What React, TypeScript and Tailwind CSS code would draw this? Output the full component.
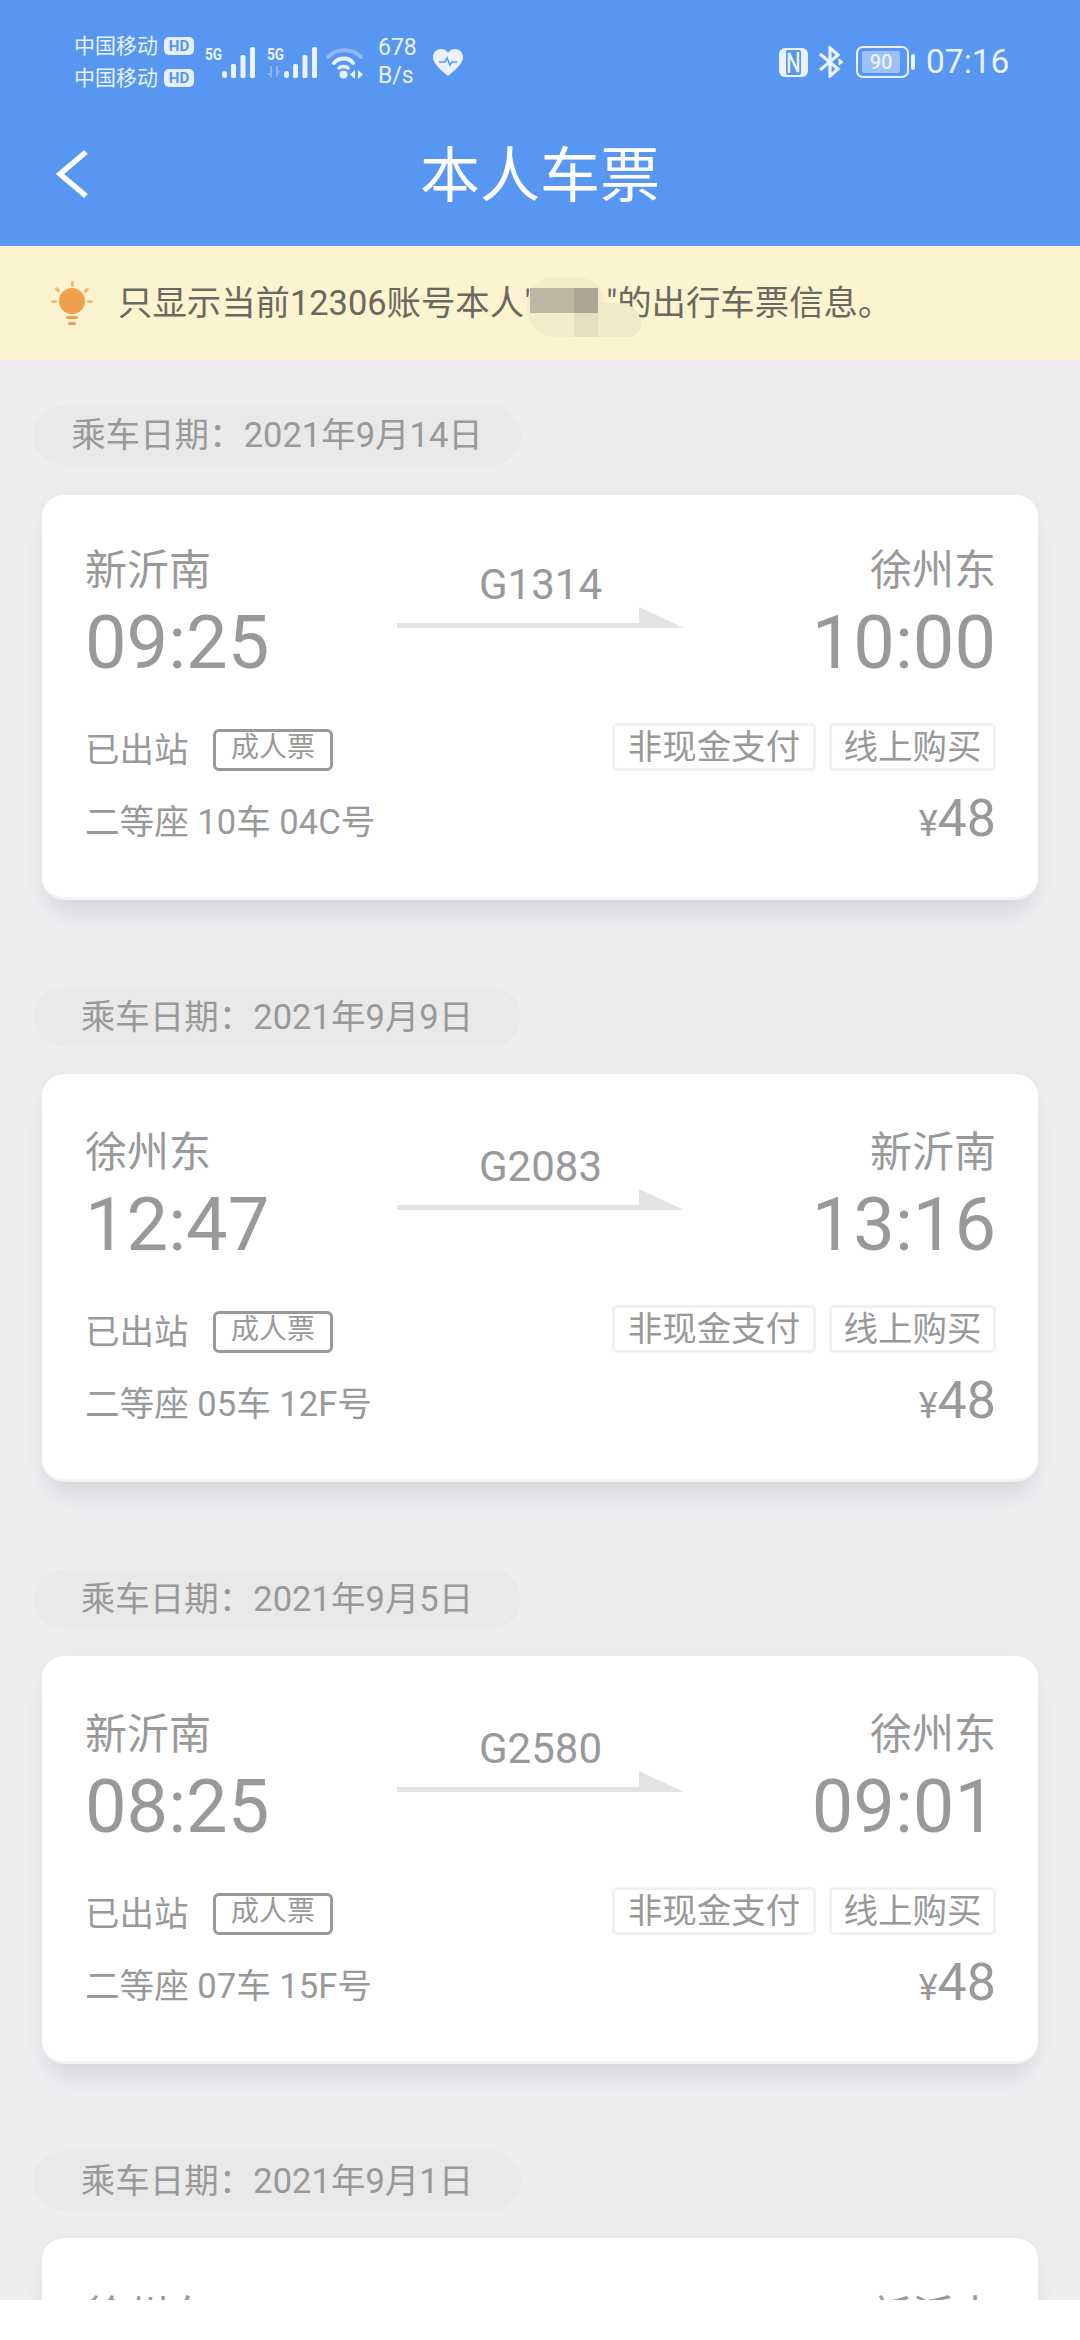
const tickets = [
	{ date: "2021年9月14日", from: "新沂南", to: "徐州东", dep: "09:25", arr: "10:00", no: "G1314", seat: "二等座 10车 04C号" },
	{ date: "2021年9月9日", from: "徐州东", to: "新沂南", dep: "12:47", arr: "13:16", no: "G2083", seat: "二等座 05车 12F号" },
	{ date: "2021年9月5日", from: "新沂南", to: "徐州东", dep: "08:25", arr: "09:01", no: "G2580", seat: "二等座 07车 15F号" },
	{ date: "2021年9月1日", from: "徐州东", to: "新沂南", dep: "", arr: "", no: "", seat: "" },
]

const HdBadge = () => (
	<span className="flex items-center justify-center w-[30px] h-[18px] rounded-[5px] bg-[#e6effd] text-[#5797f1] text-[15px] font-bold leading-none">
		HD
	</span>
)

const SignalBars = () => (
	<svg width="33" height="31" viewBox="0 0 33 31" fill="#e9f2fe">
		<rect x="0" y="24" width="5" height="7" rx="2.5" />
		<rect x="9" y="17" width="5" height="14" rx="1.5" />
		<rect x="18.5" y="8" width="5" height="23" rx="1.5" />
		<rect x="28" y="0" width="5" height="31" rx="1.5" />
	</svg>
)

const FiveG = () => (
	<span className="self-start w-[17px] mt-[1px] origin-left scale-x-[0.85] text-[16px] font-bold leading-none">5G</span>
)

const StatusBar = () => (
	<div className="flex items-center h-[104px] pt-[20px] pl-[74px] text-[#e9f2fe]">
		<div className="flex flex-col gap-[11px] w-[120px] text-[21px] leading-[21px]">
			<div className="flex items-center gap-[6px]">
				<span>中国移动</span>
				<HdBadge />
			</div>
			<div className="flex items-center gap-[6px]">
				<span>中国移动</span>
				<HdBadge />
			</div>
		</div>
		<div className="flex items-end ml-[11px] h-[32px]">
			<FiveG />
			<SignalBars />
		</div>
		<div className="relative flex items-end ml-[12px] h-[32px]">
			<FiveG />
			<svg className="absolute left-0 bottom-0" width="16" height="12" viewBox="0 0 16 12" fill="#8fb9f6">
				<path d="M5 0v12H3V5H0zM9 0l4 7h-2v5H9z" transform="matrix(1 0 0 -1 0 12)" />
			</svg>
			<SignalBars />
		</div>
		<svg className="ml-[9px]" width="37" height="33" viewBox="0 0 37 33" fill="none" strokeLinecap="round">
			<path d="M2 11C10 2 27 2 35 11" stroke="#8fb9f6" strokeWidth="4" />
			<path d="M8 17C13 11 23 11 27 17" stroke="#e9f2fe" strokeWidth="4" />
			<path d="M13 22C15 20 20 20 22 22" stroke="#e9f2fe" strokeWidth="3.5" />
			<circle cx="17.5" cy="28.5" r="4" fill="#e9f2fe" />
			<path d="M29 24v9l-5-4.500zM32 24l5 4.500-5 4.500z" fill="#e9f2fe" />
		</svg>
		<div className="flex flex-col items-start ml-[15px] w-[40px] text-[23px] leading-[28px]">
			<span>678</span>
			<span>B/s</span>
		</div>
		<svg className="ml-[15px]" width="30" height="27" viewBox="0 0 30 27">
			<path d="M15 27C8 21 0 15 0 8C0 3 4 0 8 0C11 0 13.500 1.500 15 4C16.500 1.500 19 0 22 0C26 0 30 3 30 8C30 15 22 21 15 27Z" fill="#e9f2fe" />
			<path d="M6 13h6l2-4 3 7 2-3h5" fill="none" stroke="#5797f1" strokeWidth="1.600" />
		</svg>
		<svg className="ml-[316px]" width="29" height="29" viewBox="0 0 29 29">
			<rect width="29" height="29" rx="6" fill="#e9f2fe" />
			<rect x="7" y="2" width="15" height="25" rx="2" fill="#5797f1" />
			<path d="M10 25V5L19 24V4" fill="none" stroke="#e9f2fe" strokeWidth="2.500" />
		</svg>
		<svg className="ml-[9px]" width="28" height="32" viewBox="0 0 28 32" fill="none" stroke="#e9f2fe" strokeWidth="3.200">
			<path d="M3 8L21 23L13 30V2L21 9L3 24" />
			<path d="M22 13l4 3-4 3z" fill="#e9f2fe" strokeWidth="1" />
		</svg>
		<div className="flex items-center ml-[11px] gap-[2px]">
			<div className="flex items-center w-[53px] h-[32px] rounded-[7px] border-2 border-[#e9f2fe] pl-[4px]">
				<span className="flex items-center justify-center w-[38px] h-[22px] rounded-[2px] bg-[#9cc0f8] text-[20px] leading-none font-medium">
					90
				</span>
			</div>
			<div className="w-[4px] h-[16px] rounded-full bg-[#e9f2fe]" />
		</div>
		<span className="ml-[11px] text-[33.500px] leading-none">07:16</span>
	</div>
)

const Header = () => (
	<header className="shrink-0 h-[246px] bg-[#5797f1]">
		<StatusBar />
		<div className="relative flex items-center justify-center h-[142px] pt-[4px]">
			<svg className="absolute left-[54px] top-[45px]" width="36" height="50" viewBox="0 0 36 50" fill="none">
				<path d="M32 3L6 25L32 47" stroke="#fff" strokeWidth="5.500" />
			</svg>
			<h1 className="text-[60px] leading-none text-white font-normal">本人车票</h1>
		</div>
	</header>
)

const Notice = () => (
	<div className="flex shrink-0 items-center h-[114px] bg-[#fcf3d1] pl-[51px] text-[34.400px] leading-none text-[#6b685f]">
		<svg width="42" height="44" viewBox="0 0 42 44" fill="#f19f4a">
			<circle cx="21" cy="20" r="13" />
			<rect x="20" y="0" width="3" height="6" rx="1.500" fill="#f5b878" />
			<rect x="0" y="19" width="6" height="3" rx="1.500" fill="#f5b878" />
			<rect x="36" y="19" width="6" height="3" rx="1.500" fill="#f5b878" />
			<rect x="5" y="6" width="3" height="6" rx="1.500" transform="rotate(-40 6 9)" fill="#f5b878" />
			<rect x="34" y="6" width="3" height="6" rx="1.500" transform="rotate(40 35 9)" fill="#f5b878" />
			<rect x="15" y="35" width="12" height="3" rx="1.500" />
			<rect x="17" y="41" width="8" height="3" rx="1.500" />
		</svg>
		<p className="ml-[25px] flex items-center whitespace-nowrap">
			只显示当前12306账号本人"
			{/* mosaic over the account name */}
			<span className="relative inline-block w-[71px] h-[34px]">
				<span className="absolute left-[-8px] top-[-9px] w-[78px] h-[60px] rounded-[28px] bg-[#f3ebca]" />
				<span className="absolute left-[63px] top-[17px] w-[43px] h-[34px] rounded-tr-[24px] rounded-br-[14px] bg-[#f0e9c8]" />
				<span className="absolute left-[-5px] top-[2px] w-[68px] h-[25px] bg-[#bdb7a2]" />
				<span className="absolute left-[39px] top-[2px] w-[24px] h-[25px] bg-[#aba593]" />
				<span className="absolute left-[39px] top-[27px] w-[24px] h-[24px] bg-[#e6dfc0]" />
			</span>
			"的出行车票信息。
		</p>
	</div>
)

const Arrow = () => (
	<svg width="287" height="21" viewBox="0 0 287 21" fill="#e3e3e3">
		<path d="M0 16H242V0L287 21H0Z" />
	</svg>
)

type Ticket = (typeof tickets)[number]

const TicketCard = ({ ticket, first }: { ticket: Ticket; first: boolean }) => (
	<div
		className={`mx-[42px] rounded-[22px] border-b-[3px] border-[#f3f3f5] bg-white pl-[43px] pr-[42px] text-[#999999] shadow-[0_0_24px_rgba(20,20,50,0.04),0_22px_26px_-10px_rgba(20,20,50,0.1)] ${
			first ? "h-[405px] mt-[30px] pt-[51px]" : "h-[408px] mt-[27px] pt-[54px]"
		}`}>
		<div className="flex justify-between">
			<div className="flex-1">
				<div className="text-[42px] leading-[50px]">{ticket.from}</div>
				<div className="mt-[11px] text-[74px] leading-[72px]">{ticket.dep}</div>
			</div>
			<div className="flex flex-col items-center w-[287px] pt-[19px]">
				<div className="text-[42px] leading-[40px] h-[42px]">{ticket.no}</div>
				<Arrow />
			</div>
			<div className="flex-1 text-right">
				<div className="text-[42px] leading-[50px]">{ticket.to}</div>
				<div className="mt-[11px] text-[74px] leading-[72px]">{ticket.arr}</div>
			</div>
		</div>
		<div className="flex items-end justify-between mt-[44px]">
			<div className="flex items-center">
				<span className="text-[34.500px] leading-[40px] w-[128px]">已出站</span>
				<span className="flex items-center justify-center w-[120px] h-[42px] rounded-[6px] border-[3px] border-[#999999] text-[28px] leading-none pb-[4px]">
					成人票
				</span>
			</div>
			<div className="flex gap-[13px] text-[34.500px] leading-none">
				<span className="flex items-center justify-center w-[204px] h-[48px] rounded-[5px] border-[3px] border-[#f1f1f3]">
					非现金支付
				</span>
				<span className="flex items-center justify-center w-[167px] h-[48px] rounded-[5px] border-[3px] border-[#f1f1f3]">
					线上购买
				</span>
			</div>
		</div>
		<div className="flex items-center justify-between mt-[23px]">
			<span className="text-[34.600px] leading-[50px]">{ticket.seat}</span>
			<span className="flex items-baseline text-[52px] leading-[50px]">
				<span className="text-[36px]">¥</span>48
			</span>
		</div>
	</div>
)

export default function App() {
	return (
		<div className="flex flex-col w-[1080px] h-[2340px] overflow-hidden bg-white font-[Roboto,'Noto_Sans_CJK_SC',sans-serif]">
			<Header />
			<Notice />
			<main className="h-[1940px] shrink-0 overflow-hidden bg-[#eeeef1] pt-[45px]">
				{tickets.map((ticket, i) => (
					<section key={ticket.date} className={i === 0 ? "" : "mt-[87px]"}>
						<div className="flex items-center justify-center ml-[33px] w-[488px] h-[60px] rounded-full bg-[#e9e9ea] text-[34.500px] leading-none text-[#999999]">
							乘车日期：{ticket.date}
						</div>
						<TicketCard ticket={ticket} first={i === 0} />
					</section>
				))}
			</main>
		</div>
	)
}
